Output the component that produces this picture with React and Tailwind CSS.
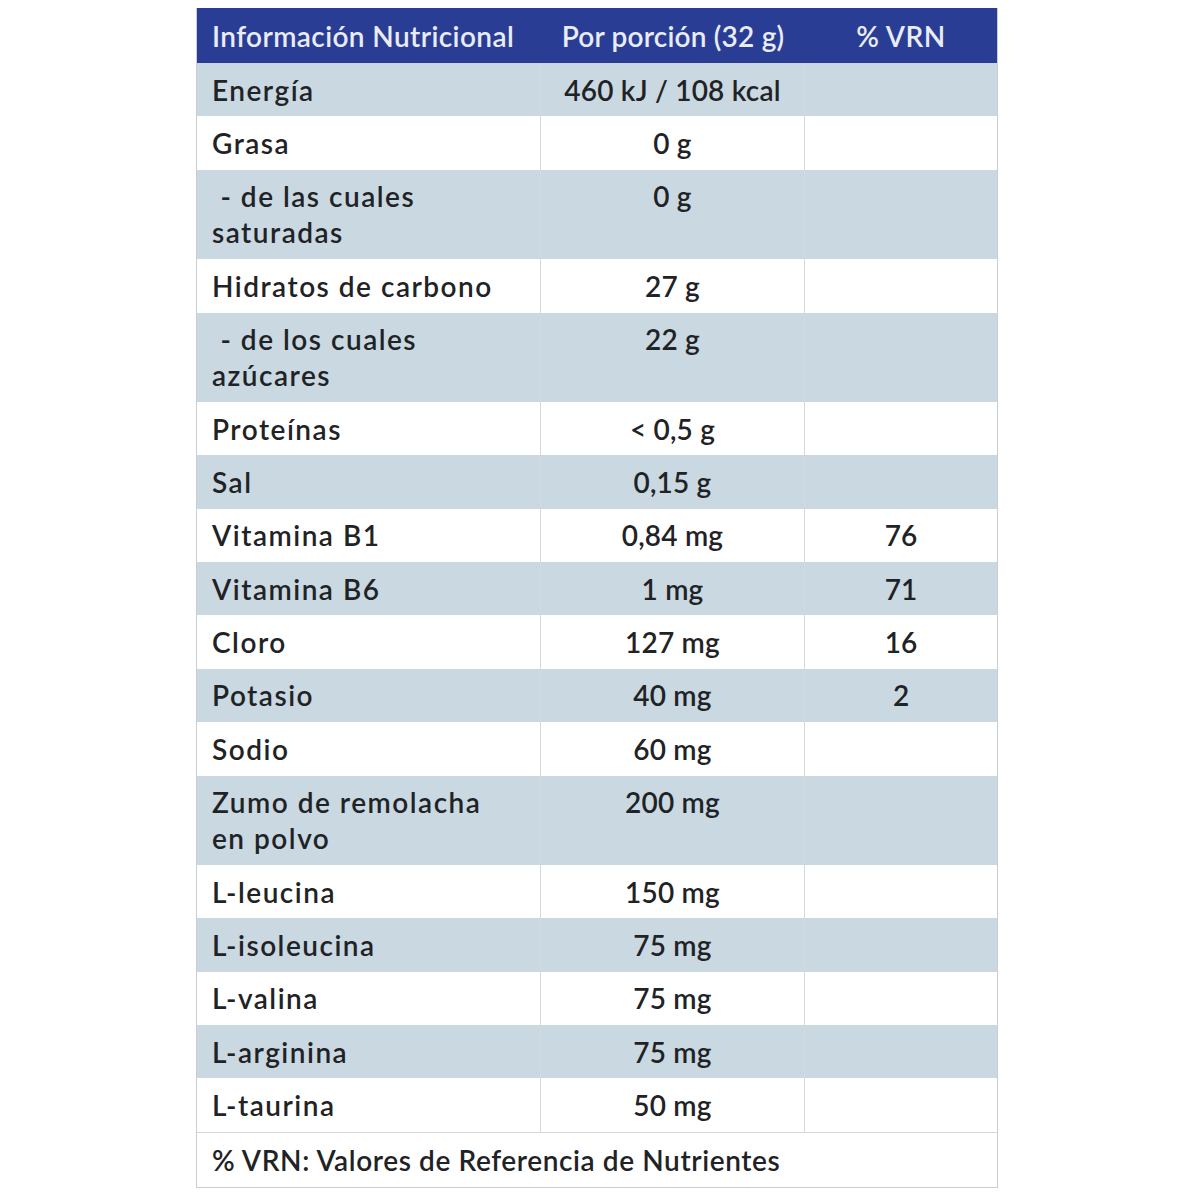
import React from "react";

const rows = [
  { name: ["Energía"], val: "460 kJ / 108 kcal", vrn: "" },
  { name: ["Grasa"], val: "0 g", vrn: "" },
  { name: ["\u00a0- de las cuales", "saturadas"], val: "0 g", vrn: "" },
  { name: ["Hidratos de carbono"], val: "27 g", vrn: "" },
  { name: ["\u00a0- de los cuales", "azúcares"], val: "22 g", vrn: "" },
  { name: ["Proteínas"], val: "< 0,5 g", vrn: "" },
  { name: ["Sal"], val: "0,15 g", vrn: "" },
  { name: ["Vitamina B1"], val: "0,84 mg", vrn: "76" },
  { name: ["Vitamina B6"], val: "1 mg", vrn: "71" },
  { name: ["Cloro"], val: "127 mg", vrn: "16" },
  { name: ["Potasio"], val: "40 mg", vrn: "2" },
  { name: ["Sodio"], val: "60 mg", vrn: "" },
  { name: ["Zumo de remolacha", "en polvo"], val: "200 mg", vrn: "" },
  { name: ["L-leucina"], val: "150 mg", vrn: "" },
  { name: ["L-isoleucina"], val: "75 mg", vrn: "" },
  { name: ["L-valina"], val: "75 mg", vrn: "" },
  { name: ["L-arginina"], val: "75 mg", vrn: "" },
  { name: ["L-taurina"], val: "50 mg", vrn: "" },
];

export default function App() {
  return (
    <div
      className="w-[1200px] h-[1200px] bg-white pt-[8px] pl-[196px]"
      style={{ fontFamily: '"Lato", "Noto Sans", sans-serif' }}
    >
      <div className="w-[802px] border-x border-b border-[#c9ced2] text-[#1f2326] text-[28px] leading-[36px] font-semibold">
        <div className="flex h-[55px] items-center bg-[#2a3d94] text-[#e9ecf5]">
          <div className="w-[344px] pl-[15px] tracking-[0.4px]">Información Nutricional</div>
          <div className="w-[264px] text-center tracking-[0.2px]">Por porción (32 g)</div>
          <div className="flex-1 text-center tracking-[0.5px]">% VRN</div>
        </div>
        {rows.map((r, i) => (
          <div
            key={i}
            className={`flex ${i % 2 === 0 ? "bg-[#c9d8e1]" : "bg-white"}`}
          >
            <div className="w-[344px] pl-[15px] py-[8.7px] border-r border-[#d3d9dd] tracking-[1.5px]">
              {r.name.map((n, j) => (
                <div key={j} className="whitespace-pre">{n}</div>
              ))}
            </div>
            <div className="w-[264px] text-center py-[8.7px] border-r border-[#d3d9dd] tracking-[0.2px]">
              {r.val}
            </div>
            <div className="flex-1 text-center py-[8.7px]">{r.vrn}</div>
          </div>
        ))}
        <div className="bg-white pl-[15px] py-[9px] border-t border-[#d3d9dd] tracking-[0.6px]">
          % VRN: Valores de Referencia de Nutrientes
        </div>
      </div>
    </div>
  );
}
